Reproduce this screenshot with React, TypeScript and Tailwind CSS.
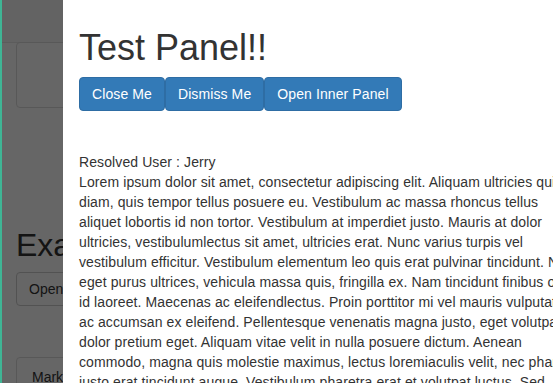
import React from "react";

const loremLines = [
  "Lorem ipsum dolor sit amet, consectetur adipiscing elit. Aliquam ultricies quis",
  "diam, quis tempor tellus posuere eu. Vestibulum ac massa rhoncus tellus",
  "aliquet lobortis id non tortor. Vestibulum at imperdiet justo. Mauris at dolor",
  "ultricies, vestibulumlectus sit amet, ultricies erat. Nunc varius turpis vel",
  "vestibulum efficitur. Vestibulum elementum leo quis erat pulvinar tincidunt. Nam",
  "eget purus ultrices, vehicula massa quis, fringilla ex. Nam tincidunt finibus odio",
  "id laoreet. Maecenas ac eleifendlectus. Proin porttitor mi vel mauris vulputate",
  "ac accumsan ex eleifend. Pellentesque venenatis magna justo, eget volutpat",
  "dolor pretium eget. Aliquam vitae velit in nulla posuere dictum. Aenean",
  "commodo, magna quis molestie maximus, lectus loremiaculis velit, nec pharetra",
  "justo erat tincidunt augue. Vestibulum pharetra erat et volutpat luctus. Sed",
  "vitae lacus non nisl pulvinar fermentum vel sed nibh.",
];

function PanelButton({ label }: { label: string }) {
  return (
    <button className="h-[34px] px-[12px] rounded-[4px] border border-[#2e6da4] bg-[#337ab7] text-white text-[14px] leading-[20px] tracking-[0.1px]">
      {label}
    </button>
  );
}

export default function App() {
  return (
    <div className="relative w-[553px] h-[383px] overflow-hidden bg-white border-l-[2px] border-[#3fb595] font-['Liberation_Sans',Arial,sans-serif] text-[#333]">
      {/* page underneath the panel */}
      <div className="h-[43px] bg-[#f8f8f8] border-b border-[#e7e7e7]" />
      <div className="pl-[14px]">
        <div className="h-[66px] w-[200px] border border-[#ddd] rounded-[4px] -mt-[1px]" />
        <h2 className="mt-[120px] text-[32px] leading-[35px] font-normal">Examples</h2>
        <button className="mt-[9px] h-[34px] px-[12px] border border-[#ccc] rounded-[4px] bg-white text-[14px]">
          Open Panel
        </button>
        <div className="mt-[51px] w-[200px] h-[60px] border border-[#ddd] rounded-[4px] pl-[15px] pt-[9px] text-[14px]">
          Markdown
        </div>
      </div>

      {/* backdrop */}
      <div className="absolute inset-0 bg-black/60" />

      {/* side panel */}
      <div className="absolute left-[61px] top-0 bottom-0 right-0 bg-white overflow-hidden pl-[16px] pt-[28px]">
        <h1 className="text-[36px] leading-[40px] font-normal whitespace-nowrap">Test Panel!!</h1>
        <div className="mt-[9px] flex">
          <PanelButton label="Close Me" />
          <PanelButton label="Dismiss Me" />
          <PanelButton label="Open Inner Panel" />
        </div>
        <div className="mt-[41px] text-[14px] leading-[20px] tracking-[0.1px] whitespace-nowrap">
          <div>Resolved User : Jerry</div>
          {loremLines.map((line, i) => (
            <div key={i}>{line}</div>
          ))}
        </div>
      </div>
    </div>
  );
}
